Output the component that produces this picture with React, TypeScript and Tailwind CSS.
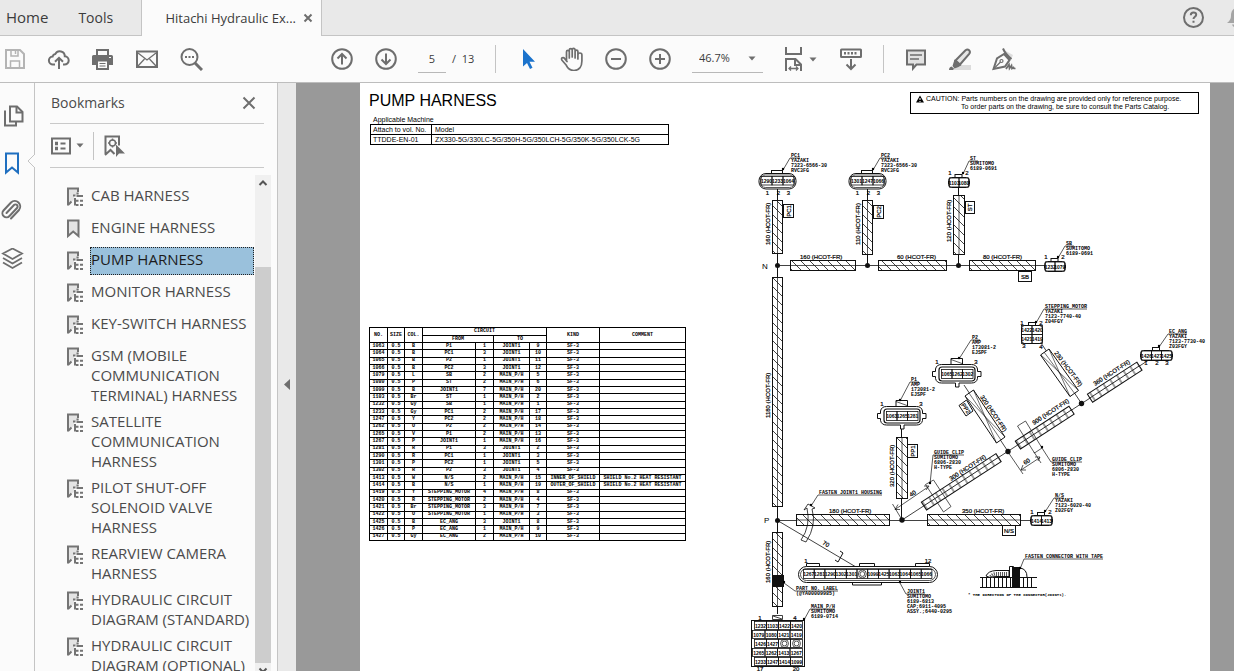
import type { ReactNode } from "react";

const bookmarks = [
  { title: "CAB HARNESS", tree: true },
  { title: "ENGINE HARNESS", tree: false },
  { title: "PUMP HARNESS", tree: true, selected: true },
  { title: "MONITOR HARNESS", tree: true },
  { title: "KEY-SWITCH HARNESS", tree: true },
  { title: "GSM (MOBILE COMMUNICATION TERMINAL) HARNESS", tree: true },
  { title: "SATELLITE COMMUNICATION HARNESS", tree: true },
  { title: "PILOT SHUT-OFF SOLENOID VALVE HARNESS", tree: true },
  { title: "REARVIEW CAMERA HARNESS", tree: true },
  { title: "HYDRAULIC CIRCUIT DIAGRAM (STANDARD)", tree: true },
  { title: "HYDRAULIC CIRCUIT DIAGRAM (OPTIONAL)", tree: true },
];

// no, colour, from, pin, to, pin, kind, comment
const circuits = [
  ["1063", "B", "P1", "1", "JOINT1", "9", "SF-3", ""],
  ["1064", "B", "PC1", "3", "JOINT1", "10", "SF-3", ""],
  ["1065", "B", "P2", "1", "JOINT1", "11", "SF-3", ""],
  ["1066", "B", "PC2", "3", "JOINT1", "12", "SF-3", ""],
  ["1079", "L", "SB", "2", "MAIN_P/H", "5", "SF-3", ""],
  ["1080", "P", "ST", "2", "MAIN_P/H", "6", "SF-3", ""],
  ["1099", "B", "JOINT1", "7", "MAIN_P/H", "20", "SF-3", ""],
  ["1103", "Br", "ST", "1", "MAIN_P/H", "2", "SF-3", ""],
  ["1232", "Gy", "SB", "1", "MAIN_P/H", "1", "SF-3", ""],
  ["1233", "Gy", "PC1", "2", "MAIN_P/H", "17", "SF-3", ""],
  ["1247", "Y", "PC2", "2", "MAIN_P/H", "18", "SF-3", ""],
  ["1262", "O", "P2", "2", "MAIN_P/H", "14", "SF-3", ""],
  ["1265", "V", "P1", "2", "MAIN_P/H", "13", "SF-3", ""],
  ["1267", "P", "JOINT1", "1", "MAIN_P/H", "16", "SF-3", ""],
  ["1281", "R", "P1", "3", "JOINT1", "2", "SF-3", ""],
  ["1290", "R", "PC1", "1", "JOINT1", "3", "SF-3", ""],
  ["1301", "P", "PC2", "1", "JOINT1", "5", "SF-3", ""],
  ["1302", "R", "P2", "3", "JOINT1", "4", "SF-3", ""],
  ["1413", "W", "N/S", "2", "MAIN_P/H", "15", "INNER_OF_SHIELD", "SHIELD No.2 HEAT RESISTANT"],
  ["1414", "B", "N/S", "1", "MAIN_P/H", "19", "OUTER_OF_SHIELD", "SHIELD No.2 HEAT RESISTANT"],
  ["1419", "Y", "STEPPING_MOTOR", "4", "MAIN_P/H", "8", "SF-3", ""],
  ["1420", "R", "STEPPING_MOTOR", "2", "MAIN_P/H", "4", "SF-3", ""],
  ["1421", "Br", "STEPPING_MOTOR", "3", "MAIN_P/H", "7", "SF-3", ""],
  ["1422", "O", "STEPPING_MOTOR", "1", "MAIN_P/H", "3", "SF-3", ""],
  ["1425", "B", "EC_ANG", "3", "JOINT1", "8", "SF-3", ""],
  ["1426", "P", "EC_ANG", "1", "MAIN_P/H", "9", "SF-3", ""],
  ["1427", "Gy", "EC_ANG", "2", "MAIN_P/H", "10", "SF-3", ""],
];

/* ---------- icons ---------- */

const Icon = ({ children, className = "" }: { children: ReactNode; className?: string }) => (
  <svg
    viewBox="0 0 24 24"
    className={`h-6 w-6 shrink-0 ${className}`}
    fill="none"
    stroke="#6e6e6e"
    strokeWidth="2"
    aria-hidden="true"
  >
    {children}
  </svg>
);

const Tool = ({ label, children }: { label: string; children: ReactNode }) => (
  <button type="button" aria-label={label} className="flex h-6 w-6 shrink-0 items-center justify-center">
    {children}
  </button>
);

const Caret = () => (
  <svg viewBox="0 0 8 5" className="h-[5px] w-2 shrink-0" fill="#6e6e6e" aria-hidden="true">
    <path d="M0.5 0.5h7L4 4.5z" />
  </svg>
);

const SaveIcon = () => (
  <Icon>
    <g stroke="#b4b4b4">
      <path d="M3 3h14l4 4v14H3z" />
      <path d="M7.500 21v-7h9v7M8 3v6h7V3" strokeWidth="1.500" />
      <path d="M12.500 4v3" strokeWidth="1.500" />
    </g>
  </Icon>
);

const UploadIcon = () => (
  <Icon>
    <path d="M8 17.500H6.200a4 4 0 0 1-.6-8 3.500 3.500 0 0 1 2.800-2.600 5 5 0 0 1 9.400 2.400 4.100 4.100 0 0 1-.4 8.200H16" />
    <path d="M12 22V11M8 14.800l4-4 4 4" />
  </Icon>
);

const PrintIcon = () => (
  <Icon>
    <path d="M6 8V3h11v5" />
    <path d="M1 9.500Q1 8 2.500 8h18Q22 8 22 9.500V18h-4v-4H5v4H1z" fill="#6e6e6e" stroke="none" />
    <path d="M6 13.500h11V22H6z" fill="#fbfbfb" />
    <path d="M8.500 16.500h6M8.500 19h6" strokeWidth="1" />
    <path d="M18 10.500h2" stroke="#fbfbfb" strokeWidth="1" />
  </Icon>
);

const MailIcon = () => (
  <Icon>
    <path d="M2 4.500h20v15.500H2z" />
    <path d="M3 6l9 7 9-7M3 19l6.500-7M21 19l-6.500-7" strokeWidth="1.300" />
  </Icon>
);

const SearchIcon = () => (
  <Icon>
    <circle cx="10.500" cy="10" r="8" />
    <path d="M16 16l7 7" strokeWidth="3" />
    <path d="M6 10h2M9.500 10h2M13 10h2" />
  </Icon>
);

const ArrowCircle = ({ down = false }: { down?: boolean }) => (
  <Icon>
    <circle cx="12" cy="12" r="9.800" />
    <path d={down ? "M12 6.500v10.500M7.500 12.500l4.500 4.500 4.500-4.500" : "M12 17.500V7M7.500 11.500L12 7l4.500 4.500"} />
  </Icon>
);

const ZoomCircle = ({ plus = false }: { plus?: boolean }) => (
  <Icon>
    <circle cx="12" cy="12" r="9.800" />
    <path d={plus ? "M7 12h10M12 7v10" : "M7 12h10"} />
  </Icon>
);

const CursorIcon = () => (
  <Icon>
    <path d="M7 2v17.500l4-3.500 3 6 2.500-1.200-3-6h5.500z" fill="#1b73cc" stroke="none" />
  </Icon>
);

const HandIcon = () => (
  <Icon>
    <path
      strokeWidth="1.700"
      strokeLinejoin="round"
      strokeLinecap="round"
      d="M6.500 14V4.700a1.400 1.400 0 0 1 2.800 0V11M9.300 10V3a1.400 1.400 0 0 1 2.900 0v7M12.200 10V2.900a1.400 1.400 0 0 1 2.900 0V11M15.100 11V4.500a1.400 1.400 0 0 1 2.800 0V12M17.900 8a1.900 1.900 0 0 1 4 0v6c0 5-2.400 9.500-8 9.500-4.500 0-6.500-2.500-8-5.800L2 13.200c-1.500-2.300 1.300-3.600 2.700-1.600L7 14.500"
    />
  </Icon>
);

const FitIcon = () => (
  <Icon>
    <path d="M4 0v7h15V0" />
    <path d="M4 24V12h9.500l5.500 5.500V24M13 12v6h6" />
    <path d="M7 21.500h9M9 19.500l-2 2 2 2M14 19.500l2 2-2 2" strokeWidth="1.300" />
  </Icon>
);

const ReadIcon = () => (
  <Icon>
    <rect x="2" y="2.500" width="20" height="7.500" rx="0.500" />
    <path d="M5 6.200h2M8.500 6.200h2M12 6.200h2M15.500 6.200h2" strokeWidth="2.500" />
    <path d="M12 12v10M7.500 17.500l4.500 4.500 4.500-4.500" />
  </Icon>
);

const CommentIcon = () => (
  <Icon>
    <path d="M3 3.500h18v14H12.500L9 21.500v-4H3z" fill="#e2e2e2" />
    <path d="M6 8h12M6 12h9" strokeWidth="1.300" />
  </Icon>
);

const HighlightIcon = () => (
  <Icon>
    <path d="M9 18h14v5H4z" fill="#dcdcdc" stroke="none" />
    <path d="M7.500 13.500L17.500 3.200q2-1.500 3.600 0 1.600 1.600.1 3.600L12 17.500z" fill="#e6e6e6" />
    <path d="M6.500 12.500l7 5.500-3 2-4 1.500L4.500 19zM1 23q0-3 2.500-3.500L6 21.500 5 23z" fill="#6e6e6e" stroke="none" />
  </Icon>
);

const PenIcon = () => (
  <Icon>
    <path d="M12 3l9 5-2 5-7-6z" fill="#dedede" stroke="none" />
    <path d="M1.500 22L5 11.500l7-4.500 5.500 6-4.500 6.500zM11 1.500q2.500 6 8.500 10.500" />
    <path d="M1.500 22l7-7" strokeWidth="1.300" />
    <circle cx="9.500" cy="14" r="1.500" strokeWidth="1.200" />
    <path d="M14 22l3-4.500.500 4 2-3 .500 3 1.500-1 .500 1h1.500" strokeWidth="1.700" />
  </Icon>
);

const BookmarkIcon = ({ tree }: { tree: boolean }) => (
  <svg viewBox="0 0 16 20" className="h-5 w-4 shrink-0" fill="none" stroke="#747474" strokeWidth="2" aria-hidden="true">
    {tree ? (
      <>
        <path d="M1 17V1.500h10V8H7v5z" fill="#e4e4e4" stroke="none" />
        <path d="M1 18.500V1.500h10V5M1 18l3.500-3.500" />
        <path
          d="M9.500 5.500h2.200v2H9.500zM6 7.500h2.500v2H6zM9.500 8h6.500v1.900H9.500zM7 11h2v7.500H7zM9 12.800h2.500v2H9zM13 12.800h3v2h-3zM9 17h2.500v2H9zM13 17h3v2h-3z"
          fill="#747474"
          stroke="none"
        />
      </>
    ) : (
      <path d="M1 1.500h10.500V17L6.200 12.500 1 17z" fill="#e4e4e4" />
    )}
  </svg>
);

/* ---------- harness drawing ---------- */

const MONO = "'Liberation Mono', monospace";

const Tiny = ({ x, y, children }: { x: number; y: number; children: ReactNode }) => (
  <text x={x} y={y} fontFamily={MONO} fontSize="5" fontWeight="700" fill="#000" stroke="none">
    {children}
  </text>
);

const Length = ({ x, y, angle = 0, children }: { x: number; y: number; angle?: number; children: ReactNode }) => (
  <text x={x} y={y} transform={`rotate(${angle} ${x} ${y})`} fontSize="6" fill="#000" stroke="#000" strokeWidth="0.2">
    {children}
  </text>
);

const Pin = ({ x, y, children }: { x: number; y: number; children: ReactNode }) => (
  <text x={x} y={y} textAnchor="middle" fontSize="6" fill="#000" stroke="#000" strokeWidth="0.2">
    {children}
  </text>
);

type NoteProps = { x: number; y: number; lines: string[]; to?: [number, number] };

const Note = ({ x, y, lines, to }: NoteProps) => {
  const end = x + Math.max(lines[0].length * 3, 8);
  return (
    <g>
      {to && (
        <>
          <path d={`M${end} ${y + 1}H${x - 1}L${to[0]} ${to[1]}`} strokeWidth="0.7" />
          <circle cx={to[0]} cy={to[1] - 1} r="1.2" fill="#000" stroke="none" />
        </>
      )}
      {lines.map((line, i) => (
        <Tiny key={line} x={x} y={y + i * 5}>
          {line}
        </Tiny>
      ))}
    </g>
  );
};

const Bar = ({ x, y, w, h }: { x: number; y: number; w: number; h: number }) => (
  <g>
    <rect x={x} y={y} width={w} height={h} fill="#fff" stroke="none" />
    <rect x={x} y={y} width={w} height={h} fill="url(#hatch)" />
    <path d={w > h ? `M${x} ${y + h / 2}h${w}` : `M${x + w / 2} ${y}v${h}`} strokeWidth="0.7" />
  </g>
);

const Tag = ({ x, y, w, h, text, upright = true }: { x: number; y: number; w: number; h: number; text: string; upright?: boolean }) => (
  <g>
    <rect x={x} y={y} width={w} height={h} fill="#fff" />
    <text
      x={x + w / 2}
      y={y + h / 2 + 2}
      transform={upright ? `rotate(-90 ${x + w / 2} ${y + h / 2})` : undefined}
      textAnchor="middle"
      fontSize="6"
      fill="#000"
      stroke="#000"
      strokeWidth="0.2"
    >
      {text}
    </text>
  </g>
);

const Cells = ({ x, y, w, h, items }: { x: number; y: number; w: number; h: number; items: string[] }) => (
  <g>
    {items.map((item, i) => (
      <g key={i}>
        <rect x={x + i * w} y={y} width={w} height={h} fill="none" strokeWidth="0.8" />
        {item ? (
          <text x={x + i * w + w / 2} y={y + h / 2 + 2} textAnchor="middle" fontSize="5" fontWeight="700" fill="#000" stroke="none">
            {item}
          </text>
        ) : (
          <g strokeWidth="0.7">
            <circle cx={x + i * w + w / 2} cy={y + h / 2} r="4" />
            <circle cx={x + i * w + w / 2} cy={y + h / 2} r="2.4" />
          </g>
        )}
      </g>
    ))}
  </g>
);

// Round three-way plug used for PC1 and PC2, centred on x
const RoundPlug = ({ x, items }: { x: number; items: string[] }) => (
  <g>
    <rect x={x - 6} y={170.5} width="11" height="3" fill="#fff" />
    <rect x={x - 18.5} y={173.5} width="37" height="15.500" rx="7" fill="#fff" />
    <rect x={x - 17} y={175} width="34" height="12.500" rx="5" strokeWidth="0.7" />
    <Cells x={x - 16.5} y={176.5} w={11} h={8.5} items={items} />
    <Pin x={x - 10} y={195}>1</Pin>
    <Pin x={x + 1} y={195}>2</Pin>
    <Pin x={x + 11} y={195}>3</Pin>
  </g>
);

// Sealed plug with ears used for P1 and P2
const EaredPlug = ({ x, y, items }: { x: number; y: number; items: string[] }) => (
  <g transform={`translate(${x} ${y})`}>
    <path d="M-6-18.500H5.500v6H-6z" fill="#fff" />
    <path d="M-6-17.500l11 4" strokeWidth="0.7" />
    <path
      d="M-24.500-5.500h3v-2.500q1-4.500 6-4.500h30q5 0 6 4.500v2.500h3.500v5h-3.500v2q-1 4.500-6 4.500H2v4h-3.500v-4h-14q-5 0-6-4.500v-2h-3z"
      fill="#fff"
    />
    <rect x="-18" y="-10" width="36" height="14" rx="3" strokeWidth="1.200" />
    <Cells x={-15.5} y={-7.5} w={10.5} h={9} items={items} />
    <Pin x={-20} y={-13.5}>1</Pin>
    <Pin x={19} y={-13.5}>3</Pin>
  </g>
);

const SmallPlug = ({ x, y, w, items }: { x: number; y: number; w: number; items: string[] }) => (
  <g>
    <rect x={x + w / 2 - 4} y={y - 3} width="7" height="3" fill="#fff" />
    <rect x={x} y={y} width={w} height="10" rx="3" fill="#fff" />
    <Cells x={x + 1} y={y + 0.5} w={(w - 2) / items.length} h={9} items={items} />
  </g>
);

// Corrugated tube laid along the diagonal run
const Tube = ({ from, to }: { from: number; to: number }) => (
  <g>
    <rect x={from} y="-4.500" width={to - from} height="9.500" fill="#fff" stroke="none" />
    <rect x={from} y="-4.500" width={to - from} height="9.500" fill="url(#mesh)" />
    <path d={`M${from} 0H${to}`} strokeWidth="0.8" />
  </g>
);

const HarnessDrawing = () => (
  <svg
    viewBox="745 145 465 526"
    className="h-[526px] w-[465px] max-w-none shrink-0"
    fill="none"
    stroke="#111"
    strokeWidth="1"
    fontFamily="'Liberation Sans', Arial, sans-serif"
    role="img"
    aria-label="Pump harness wiring drawing"
  >
    <defs>
      <pattern id="hatch" width="9" height="9" patternUnits="userSpaceOnUse">
        <path d="M-1-1L10 10" stroke="#111" strokeWidth="0.8" />
      </pattern>
      <pattern id="mesh" width="8" height="20" patternUnits="userSpaceOnUse">
        <path d="M3 0v20" stroke="#111" strokeWidth="0.8" />
      </pattern>
    </defs>

    {/* wires */}
    <path d="M777.5 189V614M867.5 189V265.500M958.500 187V265.500M901.5 429V520" />
    <path d="M777.5 265.500H1045M777.5 520.500H1031" strokeWidth="0.8" />
    <path d="M902 520L1148 360.500M964 385L1008 451.500M1041 343L1081.500 403.500M777.5 520.500L856 567" strokeWidth="0.8" />

    {/* PC1, PC2, ST, SB */}
    <RoundPlug x={777.5} items={["1290", "1233", "1064"]} />
    <RoundPlug x={867.5} items={["1301", "1247", "1066"]} />
    <Note x={791} y={157} to={[783, 170]} lines={["PC1", "YAZAKI", "7323-6566-30", "RVC3FG"]} />
    <Note x={881} y={157} to={[873, 170]} lines={["PC2", "YAZAKI", "7323-6566-30", "RVC3FG"]} />
    <SmallPlug x={948.5} y={177.5} w={21} items={["1103", "1080"]} />
    <Pin x={950} y={175}>1</Pin>
    <Pin x={967} y={175}>2</Pin>
    <Note x={970} y={160} to={[963, 174]} lines={["ST", "SUMITOMO", "6189-0691"]} />
    <Bar x={772.5} y={200.5} w={10} h={53} />
    <Bar x={862.5} y={200.5} w={10} h={54} />
    <Bar x={953.5} y={195.5} w={11} h={59} />
    <Tag x={783.5} y={204.5} w={10} h={13} text="PC1" />
    <Tag x={873.5} y={205.5} w={10} h={13} text="PC2" />
    <Tag x={965.5} y={201.5} w={9} h={12} text="ST" />
    <Length x={770} y={245} angle={-90}>160 (HCOT-FR)</Length>
    <Length x={860} y={245} angle={-90}>110 (HCOT-FR)</Length>
    <Length x={951} y={242} angle={-90}>120 (HCOT-FR)</Length>
    <text x="762" y="269" fontSize="8" fill="#000" stroke="none">N</text>
    <Bar x={790.5} y={260.5} w={65} h={10} />
    <Bar x={878.5} y={260.5} w={68} h={10} />
    <Bar x={969.5} y={260.5} w={66} h={10} />
    <Length x={800} y={259}>160 (HCOT-FR)</Length>
    <Length x={897} y={259}>60 (HCOT-FR)</Length>
    <Length x={983} y={259}>80 (HCOT-FR)</Length>
    <Tag x={1018.5} y={271.5} w={13} h={10} text="SB" upright={false} />
    <SmallPlug x={1044.5} y={261.5} w={21} items={["1232", "1079"]} />
    <Pin x={1046} y={259}>1</Pin>
    <Pin x={1063} y={259}>2</Pin>
    <Note x={1066} y={245} to={[1058, 258]} lines={["SB", "SUMITOMO", "6189-0691"]} />

    {/* trunk */}
    <Bar x={772.5} y={277.5} w={10} h={229} />
    <Length x={770} y={418} angle={-90}>1180 (HCOT-FR)</Length>
    <text x="764" y="523" fontSize="8" fill="#000" stroke="none">P</text>
    <Bar x={772.5} y={532.5} w={10} h={74} />
    <rect x="772" y="575" width="12" height="12" fill="#111" stroke="none" />
    <Length x={770} y={583} angle={-90}>160 (HCOT-FR)</Length>
    <Note x={796} y={590} to={[784, 583]} lines={["PART NO. LABEL", "(@YA00009985)"]} />

    {/* stepping motor */}
    <rect x="1028.500" y="322.500" width="7" height="3" fill="#fff" />
    <rect x="1021.500" y="325.500" width="21" height="18" rx="3" fill="#fff" />
    <Cells x={1021.5} y={325.5} w={10.5} h={9} items={["1422", "1420"]} />
    <Cells x={1021.5} y={334.5} w={10.5} h={9} items={["1421", "1419"]} />
    <Pin x={1022} y={325}>1</Pin>
    <Pin x={1041} y={325}>2</Pin>
    <Pin x={1024} y={348}>3</Pin>
    <Pin x={1041} y={349}>4</Pin>
    <Note x={1045} y={308} to={[1036, 323]} lines={["STEPPING_MOTOR", "YAZAKI", "7123-7740-40", "Z04FGY"]} />
    <path d="M1040.500 355L1049 349 1078.500 390.500 1070 396.500z" fill="#fff" />
    <path d="M1044 352L1075 394M1049 349L1070 396.500M1041 355L1078 390" strokeWidth="0.6" />
    <Length x={1054} y={353} angle={53}>230 (HCOT-FR)</Length>

    {/* EC_ANG */}
    <SmallPlug x={1140.5} y={350.5} w={32} items={["1426", "1427", "1425"]} />
    <Pin x={1146} y={365}>1</Pin>
    <Pin x={1157} y={365}>2</Pin>
    <Pin x={1167} y={365}>3</Pin>
    <Note x={1169} y={333} to={[1159, 347]} lines={["EC_ANG", "YAZAKI", "7123-7730-40", "Z03FGY"]} />

    {/* P2 branch */}
    <EaredPlug x={957} y={377} items={["1065", "1262", "1302"]} />
    <Note x={972} y={339} to={[959, 359]} lines={["P2", "AMP", "173081-2", "EJSPF"]} />
    <path d="M965 396L973.500 390 1005 437 996.500 443z" fill="#fff" />
    <path d="M969 393L1001 440M973.500 390L996.500 443M965 396L1005 437" strokeWidth="0.6" />
    <path d="M959 405.500L966.500 400 973 411 966 416z" fill="#fff" />
    <Length x={961} y={405} angle={55}>PP2</Length>
    <Length x={980} y={397} angle={56}>320 (HCOT-FR)</Length>

    {/* P1 branch */}
    <EaredPlug x={902} y={419} items={["1063", "1265", "1281"]} />
    <Note x={911} y={381} to={[900, 401]} lines={["P1", "AMP", "173081-2", "EJSPF"]} />
    <Bar x={896.5} y={437.5} w={11} h={61} />
    <Tag x={907.5} y={444.5} w={10} h={13} text="PP1" />
    <Length x={894} y={487} angle={-90}>320 (HCOT-FR)</Length>

    {/* diagonal run */}
    <g transform="translate(902 520) rotate(-33)">
      <Tube from={26} to={115} />
      <Tube from={138} to={202} />
      <Tube from={224} to={283} />
    </g>
    <Length x={951} y={481} angle={-33}>300 (HCOT-FR)</Length>
    <Length x={1034} y={425} angle={-33}>900 (HCOT-FR)</Length>
    <Length x={1095} y={386} angle={-33}>360 (HCOT-FR)</Length>
    <g strokeWidth="0.7">
      <path d="M925.500 484.500L933.500 480 951 506.500 943.500 512z" />
      <path d="M892.500 504l9 15M895 509.500l33-22.500M898 504.500l-3 5h5M924 486h5l-3 4" />
      <path d="M1017.500 426L1025.500 421 1042 448 1034.500 453z" />
      <path d="M1008 452l15 22M1034 452l7 11M1021 470l19-12.500M1023 465l-2 5h5M1035 457h5l-2 4" />
    </g>
    <Length x={911} y={497} angle={-33}>40</Length>
    <Length x={1025} y={465} angle={-33}>60</Length>
    <Note x={934} y={454} to={[930, 484]} lines={["GUIDE_CLIP", "SUMITOMO", "6806-2830", "H-TYPE"]} />
    <Note x={1052} y={461} to={[1042, 448]} lines={["GUIDE_CLIP", "SUMITOMO", "6806-2830", "H-TYPE"]} />

    {/* P to N/S */}
    <Bar x={796.5} y={514.5} w={93} h={11} />
    <Bar x={927.5} y={514.5} w={93} h={11} />
    <Length x={829} y={513}>180 (HCOT-FR)</Length>
    <Length x={962} y={513}>350 (HCOT-FR)</Length>
    <Tag x={1002.5} y={525.5} w={13} h={10} text="N/S" upright={false} />
    <SmallPlug x={1030.5} y={515.5} w={22} items={["1414", "1413"]} />
    <Pin x={1032} y={514}>1</Pin>
    <Pin x={1050} y={514}>2</Pin>
    <Note x={1055} y={497} to={[1045, 512]} lines={["N/S", "YAZAKI", "7123-6020-40", "Z02FGY"]} />
    <Note x={819} y={494} to={[811, 506]} lines={["FASTEN JOINT1 HOUSING"]} />
    <path d="M807 508q4 18-6 32l5 2q11-17 6-33l3-1-7-4-4 6z" strokeWidth="0.8" />
    <Length x={822} y={544} angle={30}>70</Length>
    <path d="M840 551l3 2-5 9-3-2" />

    {/* JOINT1 */}
    <path d="M806.500 563.500h13v3h-13zM859.500 563.500h15v3h-15zM915.500 563.500h14v3h-14zM852.500 582.500h29v2.500h-29z" />
    <rect x="798.500" y="566.500" width="139" height="16" rx="8" fill="#fff" />
    <rect x="800.500" y="568.500" width="135" height="12" rx="6" strokeWidth="0.700" />
    <Cells
      x={803.5}
      y={569.5}
      w={10.7}
      h={9}
      items={["1267", "1281", "1290", "1302", "1301", "", "1099", "1425", "1063", "1064", "1065", "1066"]}
    />
    <Pin x={806} y={563}>1</Pin>
    <Pin x={928} y={563}>12</Pin>
    <Note x={907} y={593} to={[900, 583]} lines={["JOINT1", "SUMITOMO", "6189-6813", "CAP;6911-4095", "ASSY.;6440-0295"]} />

    {/* main plug */}
    <Note x={811} y={608} to={[804, 620]} lines={["MAIN_P/H", "SUMITOMO", "6189-0714"]} />
    <path d="M772.500 615.500h10v4h-10zM773 616l9 3" strokeWidth="0.8" />
    <rect x="751.500" y="620.500" width="53" height="46" />
    <Cells x={754.5} y={621.5} w={12} h={8} items={["1232", "1103", "1422", "1420"]} />
    <Cells x={752.5} y={630.5} w={12.5} h={8} items={["1079", "1080", "1421", "1419"]} />
    <Cells x={754.5} y={639.5} w={12} h={8} items={["1426", "1427", "", ""]} />
    <Cells x={752.5} y={648.5} w={12.5} h={8} items={["1265", "1262", "1413", "1267"]} />
    <Cells x={754.5} y={657.5} w={12} h={8} items={["1233", "1247", "1414", "1099"]} />
    <Pin x={760} y={620}>1</Pin>
    <Pin x={795} y={620}>4</Pin>
    <Pin x={760} y={671}>17</Pin>
    <Pin x={796} y={671}>20</Pin>

    {/* tape detail */}
    <path d="M980 577.500h57M980 587.500h57" />
    <path d="M982.500 577v10M986.500 577v10M990.500 577v10M994.500 577v10M998.500 577v10M1002.500 577v10M1006.500 577v10M1010.500 577v10M1023.500 577v10M1027.500 577v10M1031.500 577v10" />
    <path d="M986 576q2-5 10-5.500h13v6h-12q-5 0-7 1zM1009.500 577v-10.500h4v10.500M1020 568q7 1 7 9" />
    <path d="M991 577q2-3 5-3h12" stroke="#555" strokeWidth="4" strokeDasharray="1 1" />
    <rect x="1012" y="567" width="8" height="21" fill="#111" stroke="none" />
    <Note x={1025} y={558} to={[1020, 569]} lines={["FASTEN CONNECTOR WITH TAPE"]} />
    <text x="968" y="596" fontFamily={MONO} fontSize="4" fontWeight="700" fill="#000" stroke="none">
      * THE DIRECTION OF THE CONNECTOR(JOINT1).
    </text>

    <g fill="#111" stroke="none">
      <circle cx="777.500" cy="265.500" r="2.500" />
      <circle cx="867.500" cy="265.500" r="2.500" />
      <circle cx="958.500" cy="265.500" r="2.500" />
      <circle cx="777.500" cy="520.500" r="2.500" />
      <circle cx="902" cy="520" r="2.700" />
      <circle cx="1008" cy="451.500" r="2.700" />
      <circle cx="1081.500" cy="403.500" r="2.700" />
    </g>
  </svg>
);

/* ---------- tables on the page ---------- */

const ModelTable = () => (
  <table className="ml-px w-[299px] border-collapse border border-black text-left text-[7px] leading-[9px]">
    <tbody>
      <tr>
        <th className="w-[61px] border border-black px-[2px] py-0 font-normal">Attach to vol. No.</th>
        <th className="border border-black px-[3px] py-0 font-normal">Model</th>
      </tr>
      <tr>
        <td className="border border-black px-[2px] py-0">TTDDE-EN-01</td>
        <td className="border border-black px-[3px] py-0">ZX330-5G/330LC-5G/350H-5G/350LCH-5G/350K-5G/350LCK-5G</td>
      </tr>
    </tbody>
  </table>
);

const CircuitTable = () => (
  <table className="h-[214px] w-[316px] table-fixed border-collapse text-center font-['Liberation_Mono',monospace] text-[5px] leading-[5px] font-bold whitespace-nowrap [&_td]:border [&_td]:border-black [&_td]:p-0 [&_th]:border [&_th]:border-black [&_th]:p-0">
    <colgroup>
      <col className="w-[18px]" />
      <col className="w-[17px]" />
      <col className="w-[18px]" />
      <col className="w-[53px]" />
      <col className="w-[18px]" />
      <col className="w-[36px]" />
      <col className="w-[17px]" />
      <col className="w-[53px]" />
      <col className="w-[86px]" />
    </colgroup>
    <thead>
      <tr className="h-2">
        <th rowSpan={2}>NO.</th>
        <th rowSpan={2}>SIZE</th>
        <th rowSpan={2}>COL.</th>
        <th colSpan={4} className="h-2">CIRCUIT</th>
        <th rowSpan={2}>KIND</th>
        <th rowSpan={2}>COMMENT</th>
      </tr>
      <tr className="h-[7px]">
        <th colSpan={2} className="h-[7px]">FROM</th>
        <th colSpan={2}>TO</th>
      </tr>
    </thead>
    <tbody>
      {circuits.map(([no, colour, from, fromPin, to, toPin, kind, comment]) => (
        <tr key={no}>
          <td>{no}</td>
          <td>0.5</td>
          <td>{colour}</td>
          <td>{from}</td>
          <td>{fromPin}</td>
          <td>{to}</td>
          <td>{toPin}</td>
          <td>{kind}</td>
          <td>{comment}</td>
        </tr>
      ))}
    </tbody>
  </table>
);

/* ---------- window parts ---------- */

const TabBar = () => (
  <header className="flex h-9 shrink-0 bg-[#e9e9e9] text-sm text-[#3c3c3c]">
    <nav className="flex w-[142px] items-center gap-[30px] border-r border-b border-[#c4c4c4] pl-[6px]">
      <a href="#home" className="text-[15px]">Home</a>
      <a href="#tools">Tools</a>
    </nav>
    <div className="flex w-[179px] items-center justify-end gap-[7px] bg-[#fbfbfb] pr-2">
      <span className="text-[13px] whitespace-nowrap">Hitachi Hydraulic Ex...</span>
      <button type="button" aria-label="Close tab">
        <svg viewBox="0 0 10 10" className="h-[10px] w-[10px]" stroke="#6e6e6e" strokeWidth="2">
          <path d="M1.500 1.500l7 7M8.500 1.500l-7 7" />
        </svg>
      </button>
    </div>
    <div className="flex flex-1 items-center justify-end gap-5 overflow-hidden border-b border-l border-[#c4c4c4]">
      <button type="button" aria-label="Help" className="flex h-6 w-6 items-center">
        <svg viewBox="0 0 24 24" className="h-6 w-6" fill="none" stroke="#6e6e6e" strokeWidth="2">
          <circle cx="12.500" cy="11.500" r="9.500" />
          <path d="M9.800 9.200q0-2.700 2.700-2.700t2.700 2.300c0 2-2.700 2-2.700 4.200M12.500 14.800v2" />
        </svg>
      </button>
      <button type="button" aria-label="Notifications" className="h-6 w-[9px] overflow-hidden">
        <svg viewBox="0 0 24 24" className="h-6 w-6" fill="#a5a5a5">
          <path d="M11 2q-5 1-5 8 0 4-4 7h18q-3-3-3-7 0-7-6-8zM7 18.500h8q-1 3-4 3t-4-3z" />
        </svg>
      </button>
    </div>
  </header>
);

const Toolbar = () => (
  <div className="flex h-[47px] shrink-0 items-center border-b border-[#bdbdbd] bg-[#fbfbfb] pl-[3px] text-[11px] text-[#3c3c3c]">
    <div className="flex gap-5">
      <Tool label="Save"><SaveIcon /></Tool>
      <Tool label="Upload"><UploadIcon /></Tool>
      <Tool label="Print"><PrintIcon /></Tool>
      <Tool label="Mail"><MailIcon /></Tool>
      <Tool label="Find"><SearchIcon /></Tool>
    </div>
    <div className="ml-[127px] flex gap-5">
      <Tool label="Previous page"><ArrowCircle /></Tool>
      <Tool label="Next page"><ArrowCircle down /></Tool>
    </div>
    <div className="ml-5 flex items-center">
      <input
        aria-label="Page number"
        defaultValue="5"
        className="h-7 w-7 border-b border-[#b8b8b8] bg-transparent text-center"
      />
      <span className="ml-[6px] w-[43px] whitespace-pre">/  13</span>
    </div>
    <div className="h-7 border-l border-[#c4c4c4]" />
    <div className="ml-5 flex gap-5">
      <Tool label="Select"><CursorIcon /></Tool>
      <Tool label="Pan"><HandIcon /></Tool>
      <Tool label="Zoom out"><ZoomCircle /></Tool>
      <Tool label="Zoom in"><ZoomCircle plus /></Tool>
    </div>
    <div className="ml-5 flex h-7 w-[71px] items-center border-b border-[#b8b8b8] px-[7px]">
      <select aria-label="Zoom level" className="min-w-0 flex-1 appearance-none bg-transparent">
        <option>46.7%</option>
      </select>
      <Caret />
    </div>
    <button type="button" aria-label="Fit page" className="ml-[19px] flex items-center gap-[3px]">
      <FitIcon />
      <Caret />
    </button>
    <div className="ml-[22px]">
      <Tool label="Read mode"><ReadIcon /></Tool>
    </div>
    <div className="ml-5 h-7 border-l border-[#c4c4c4]" />
    <div className="ml-5 flex gap-5">
      <Tool label="Comment"><CommentIcon /></Tool>
      <Tool label="Highlight"><HighlightIcon /></Tool>
      <Tool label="Sign"><PenIcon /></Tool>
    </div>
  </div>
);

const Rail = () => (
  <nav className="relative flex w-[35px] shrink-0 flex-col gap-6 border-r border-[#c4c4c4] bg-[#fbfbfb] pt-[21px] pl-px">
    <Tool label="Page thumbnails">
      <Icon>
        <path d="M4 6.500v15h11v-4" />
        <path d="M9 2.500h7l5.500 5.500v9.500H9z" fill="#fbfbfb" />
        <path d="M15.500 2.500V8.500h6" />
      </Icon>
    </Tool>
    <Tool label="Bookmarks">
      <Icon>
        <path d="M5 1.500h12V20.500l-6-5-6 5z" stroke="#1f6fc0" />
      </Icon>
    </Tool>
    <Tool label="Attachments">
      <Icon>
        <path
          strokeLinecap="round"
          d="M6 12.500l7.500-8a2 2 0 0 1 3 3L9 15.500a4 4 0 0 1-6-5.500L10.500 2a5.500 5.500 0 0 1 8 7.500l-8 8.500"
          transform="translate(-.500 .500)"
        />
      </Icon>
    </Tool>
    <Tool label="Layers">
      <Icon>
        <path d="M2 14.500l9.500 5.500L21 14.500M2 10l9.500 5.500L21 10M2 5.500L11.500 0.500 21 5.500 11.500 11z" strokeWidth="1.800" />
      </Icon>
    </Tool>
    <svg viewBox="0 0 8 14" className="absolute top-[71px] -right-px h-[14px] w-2" fill="#fbfbfb" stroke="#c4c4c4" aria-hidden="true">
      <path d="M8 0L1 7l7 7" />
    </svg>
  </nav>
);

const BookmarksPanel = () => (
  <aside className="flex w-[243px] shrink-0 flex-col border-r border-[#c4c4c4] bg-[#fbfbfb] pr-[6px] pl-[15px] text-[#4b4b4b]">
    <div className="mr-[7px] flex h-[41px] shrink-0 items-center justify-between border-b border-[#c9c9c9] pr-2">
      <h2 className="pl-px text-sm">Bookmarks</h2>
      <button type="button" aria-label="Close panel">
        <svg viewBox="0 0 14 14" className="h-[14px] w-[14px]" stroke="#6e6e6e" strokeWidth="2">
          <path d="M1.500 1.500l11 11M12.500 1.500l-11 11" />
        </svg>
      </button>
    </div>
    <div className="mr-[7px] flex h-11 shrink-0 items-center border-b border-[#c9c9c9]">
      <button type="button" aria-label="Options" className="flex items-center gap-1">
        <svg viewBox="0 0 22 18" className="h-[18px] w-[22px]" fill="none" stroke="#6e6e6e" strokeWidth="2">
          <path d="M2 1.500h18v15H2z" />
          <path d="M5 6.500h3M5 11.500h3" strokeWidth="3.500" />
          <path d="M10.500 6.500h5M10.500 11.500h5" />
        </svg>
        <Caret />
      </button>
      <div className="ml-[9px] h-7 border-l border-[#c4c4c4]" />
      <button type="button" aria-label="Expand current bookmark" className="ml-[9px]">
        <Icon>
          <path d="M2.500 20.500V2.500h13.500v9M2 21l5.500-5 4 4" />
          <circle cx="9.500" cy="9" r="3" strokeWidth="1.500" />
          <path d="M9.500 4.500v2M9.500 11.500v2M5 9h2M12 9h2" strokeWidth="1.500" />
          <path d="M13 10.500v12.500l3-3.500h6z" fill="#6e6e6e" stroke="none" />
        </Icon>
      </button>
    </div>
    <div className="flex min-h-0 flex-1 pt-[7px]">
      <ul className="min-w-0 flex-1 overflow-hidden pt-2 pl-[17px]">
        {bookmarks.map((item) => (
          <li key={item.title}>
            <a href="#bookmark" className="flex min-h-8 items-start gap-[7px]">
              <span className="pt-1">
                <BookmarkIcon tree={item.tree} />
              </span>
              <span
                className={
                  item.selected
                    ? "h-7 flex-1 border border-dotted border-[#222] bg-[#9ac1dc] pt-px text-[15px] leading-5 text-[#1c1c1c]"
                    : "flex-1 pt-[2px] pb-1 pl-px text-[15px] leading-5"
                }
              >
                {item.title}
              </span>
            </a>
          </li>
        ))}
      </ul>
      <div className="ml-px flex w-4 shrink-0 flex-col items-center bg-[#f0f0f0]">
        <svg viewBox="0 0 16 16" className="h-4 w-4 shrink-0" fill="none" stroke="#555" strokeWidth="2">
          <path d="M4.500 10L8 6.500l3.500 3.500" />
        </svg>
        <div className="mt-[76px] w-full flex-1 bg-[#cdcdcd]" />
        <svg viewBox="0 0 16 8" className="h-2 w-4 shrink-0" fill="none" stroke="#555" strokeWidth="2">
          <path d="M4.500 5.500L8 9l3.500-3.500" />
        </svg>
      </div>
    </div>
  </aside>
);

const Page = () => (
  <article className="mr-6 ml-16 flex flex-1 justify-between overflow-hidden bg-white font-['Liberation_Sans',Arial,sans-serif] text-black">
    <section className="shrink-0 pl-[9px]">
      <h1 className="pt-[7px] text-base leading-[22px]">PUMP HARNESS</h1>
      <p className="pt-[3px] pl-1 text-[7px] leading-[9px]">Applicable Machine</p>
      <ModelTable />
      <div className="pt-[182px]">
        <CircuitTable />
      </div>
    </section>
    <section className="flex shrink-0 flex-col">
      <div className="mt-[9px] mr-[11px] mb-[31px] flex h-[22px] w-[289px] gap-[2px] self-end border border-black px-[5px] pt-[2px] text-[7px] leading-[8px] whitespace-nowrap">
        <svg viewBox="0 0 8 8" className="h-2 w-2 shrink-0">
          <path d="M4 0.500L8 7.500H0z" />
          <path d="M4 3v2M4 6v1" stroke="#fff" />
        </svg>
        <p>
          CAUTION: Parts numbers on the drawing are provided only for reference purpose.
          <br />
          <span className="pl-[35px]">To order parts on the drawing, be sure to consult the Parts Catalog.</span>
        </p>
      </div>
      <HarnessDrawing />
    </section>
  </article>
);

export default function App() {
  return (
    <div className="flex h-screen flex-col overflow-hidden font-['Open_Sans','Noto_Sans',sans-serif]">
      <TabBar />
      <Toolbar />
      <main className="flex min-h-0 flex-1">
        <Rail />
        <BookmarksPanel />
        <button type="button" aria-label="Collapse panel" className="flex w-[18px] shrink-0 items-center justify-center bg-[#e9e9e9] pt-[14px]">
          <svg viewBox="0 0 6 11" className="h-[11px] w-[6px]" fill="#6e6e6e">
            <path d="M6 0v11L0 5.500z" />
          </svg>
        </button>
        <div className="flex min-w-0 flex-1 bg-[#999]">
          <Page />
        </div>
      </main>
    </div>
  );
}
